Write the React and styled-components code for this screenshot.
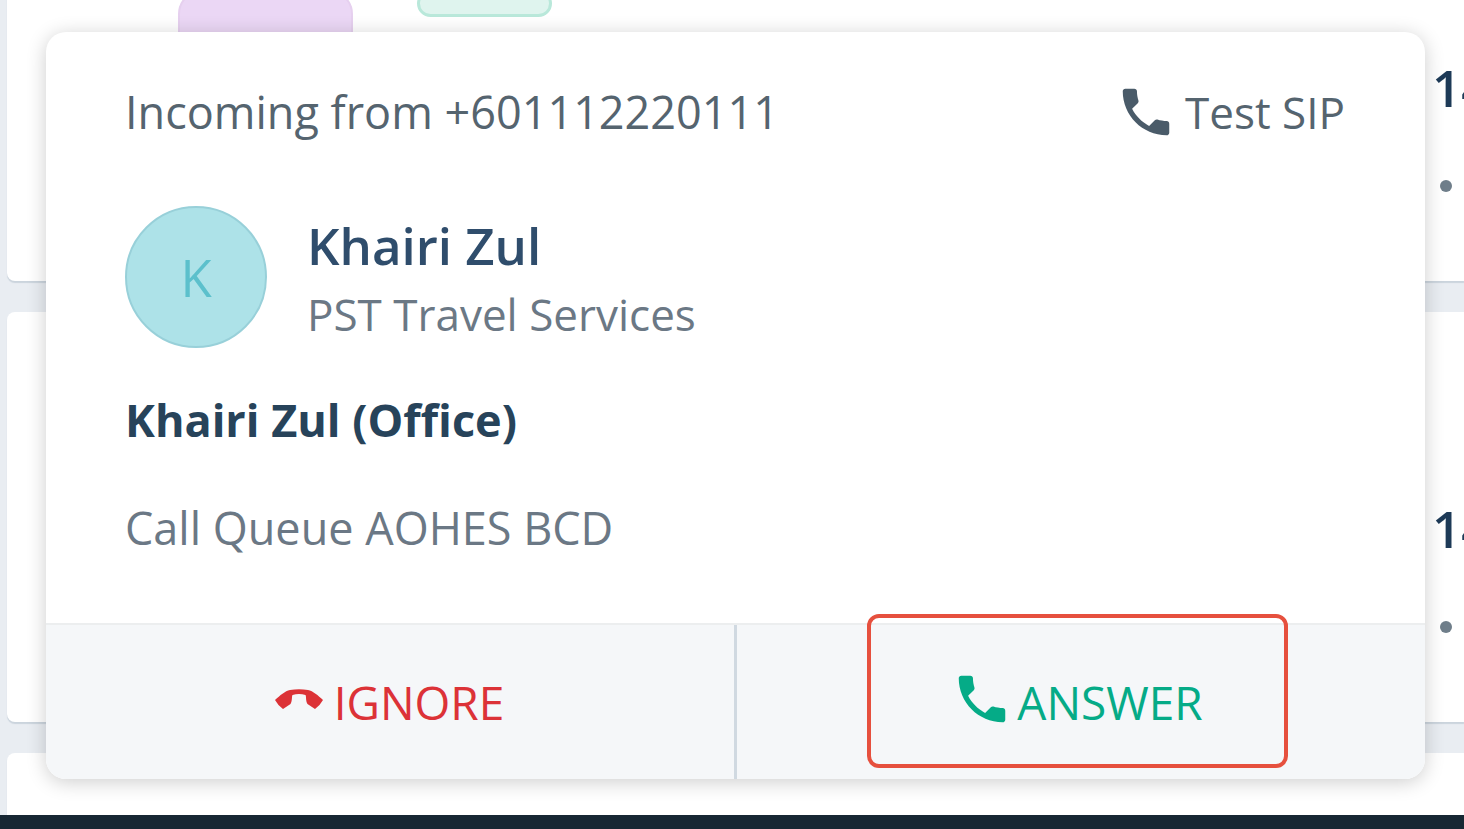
import React from 'react';
import styled, { createGlobalStyle } from 'styled-components';
import { MdPhone } from 'react-icons/md';

const GlobalStyle = createGlobalStyle`
  * {
    box-sizing: border-box;
  }

  body {
    margin: 0;
    background: #e9edf2;
    font-family: 'Open Sans', 'Noto Sans', sans-serif;
    color: #55646f;
  }

  h2,
  p,
  ul {
    margin: 0;
    padding: 0;
  }
`;

const Page = styled.div`
  position: relative;
  display: flex;
  flex-direction: column;
  height: 100vh;
  overflow: hidden;
`;

/* the list is scrolled part of the way through its first card */
const List = styled.ul`
  flex: 1;
  min-height: 0;
  display: flex;
  flex-direction: column;
  gap: 31px;
  margin-top: -129px;
  padding-left: 7px;
  list-style: none;
`;

const Card = styled.li`
  flex: none;
  display: flex;
  align-items: flex-start;
  height: 410px;
  padding: 119px 0 0 171px;
  background: #ffffff;
  border-radius: 8px 0 0 8px;
  box-shadow: 0 2px 1px #cbd4dd;
`;

const Thumb = styled.div`
  width: 175px;
  height: 175px;
  background: #ebd7f5;
  border: 2px solid #e6d0ef;
  border-radius: 24px;
`;

const Tag = styled.div`
  width: 135px;
  height: 27px;
  margin-left: 64px;
  background: #dff4ee;
  border: 3px solid #b9e8da;
  border-radius: 14px;
`;

const Meta = styled.div`
  width: 32px;
  margin-left: auto;
  padding-top: 61px;
  white-space: nowrap;
`;

const Count = styled.p`
  font-size: 51px;
  line-height: 72px;
  font-weight: 600;
  color: #1d3a57;
`;

const Dot = styled.div`
  width: 12px;
  height: 12px;
  margin: 57px 0 0 8px;
  background: #6f7e8a;
  border-radius: 50%;
`;

const BottomBar = styled.footer`
  position: relative;
  flex: none;
  height: 14px;
  background: #172733;
`;

const Popup = styled.section`
  position: absolute;
  top: 32px;
  left: 46px;
  right: 39px;
  background: #ffffff;
  border-radius: 20px;
  box-shadow: 0 3px 20px rgba(0, 0, 0, 0.2);
`;

const Body = styled.div`
  padding: 48px 80px 63px 79px;
`;

const Header = styled.div`
  display: flex;
  justify-content: space-between;
  align-items: center;
`;

const Text = styled.p`
  font-size: ${({ $small }) => ($small ? 44 : 45)}px;
  line-height: 64px;
  color: ${({ $muted }) => ($muted ? '#6b7885' : '#55646f')};
`;

const Line = styled.div`
  display: flex;
  align-items: center;
  gap: 8px;

  svg {
    color: #4a5b69;
  }
`;

const Caller = styled.div`
  display: flex;
  align-items: center;
  gap: 40px;
  margin: 62px 0 40px;
`;

const Avatar = styled.div`
  display: flex;
  justify-content: center;
  align-items: center;
  width: 142px;
  height: 142px;
  background: #ade2e8;
  border: 2px solid #98d0d9;
  border-radius: 50%;
  font-size: 51px;
  color: #5cc0cc;
`;

const Name = styled.h2`
  font-size: 51px;
  line-height: 74px;
  font-weight: 600;
  color: #2f4d6c;
`;

const Contact = styled.p`
  margin-bottom: 44px;
  font-size: 45px;
  line-height: 64px;
  font-weight: 700;
  color: #27435a;
`;

const Actions = styled.div`
  display: flex;
  border-top: 2px solid #eceeef;
  background: #f5f7f9;
  border-radius: 0 0 20px 20px;
`;

const Action = styled.button`
  position: relative;
  flex: 1;
  display: flex;
  justify-content: center;
  align-items: center;
  gap: 4px;
  height: 154px;
  padding: 0 8px 0 0;
  background: transparent;
  border: 0;
  font-family: inherit;
  font-size: 46px;
  color: ${({ $color }) => $color};
  cursor: pointer;

  svg {
    margin-bottom: 6px;
  }

  & + & {
    border-left: 3px solid #d0d9e1;
  }
`;

const Highlight = styled.span`
  position: absolute;
  top: -11px;
  right: 137px;
  bottom: 11px;
  left: 130px;
  border: 4px solid #e6503e;
  border-radius: 12px;
  pointer-events: none;
`;

const HangUpIcon = () => (
  <svg width="62" height="62" viewBox="0 0 62 62" fill="currentColor">
    <path d="M7 32C12 27.500 17 23 22 22Q31 20.500 40 22C45 23 50 27.500 55 32Q52 37.500 47 41L39.500 36C37.500 33 38.500 29 37.500 27Q31 25 24.500 27C23.500 29 24.500 33 22.500 36L15 41Q10 37.500 7 32Z" />
  </svg>
);

const calls = [{ count: 14 }, { count: 14 }, {}];

const App = () => {
  return (
    <Page>
      <GlobalStyle />
      <List>
        {calls.map(({ count }, i) => (
          <Card key={i}>
            <Thumb />
            <Tag />
            {count && (
              <Meta>
                <Count>{count}</Count>
                <Dot />
              </Meta>
            )}
          </Card>
        ))}
      </List>
      <BottomBar />
      <Popup>
        <Body>
          <Header>
            <Text>Incoming from +601112220111</Text>
            <Line>
              <MdPhone size={62} />
              <Text $small>Test SIP</Text>
            </Line>
          </Header>
          <Caller>
            <Avatar>K</Avatar>
            <div>
              <Name>Khairi Zul</Name>
              <Text $muted $small>
                PST Travel Services
              </Text>
            </div>
          </Caller>
          <Contact>Khairi Zul (Office)</Contact>
          <Text $muted>Call Queue AOHES BCD</Text>
        </Body>
        <Actions>
          <Action type="button" $color="#dc3237">
            <HangUpIcon />
            IGNORE
          </Action>
          <Action type="button" $color="#05ab87">
            <MdPhone size={62} />
            ANSWER
            <Highlight />
          </Action>
        </Actions>
      </Popup>
    </Page>
  );
};

export default App;
